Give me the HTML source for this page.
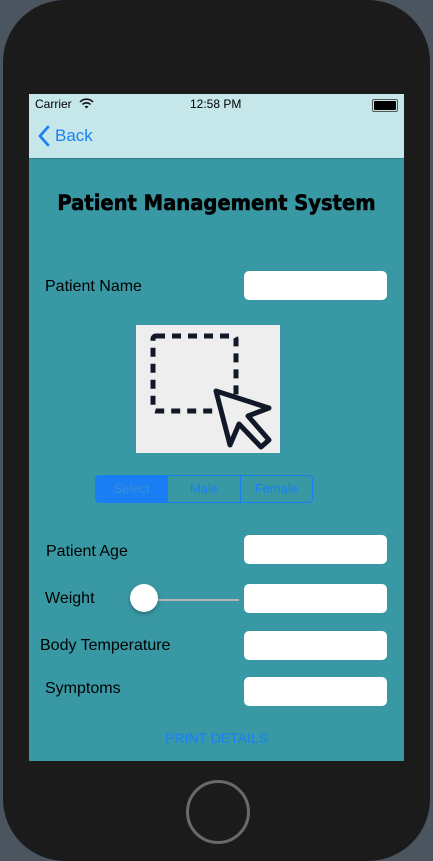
<!DOCTYPE html>
<html><head><style>
body{margin:0;width:433px;height:861px;background:#4a5560;overflow:hidden;font-family:"Liberation Sans",sans-serif;position:relative}
.phone{position:absolute;left:3px;top:0;width:427px;height:861px;background:#1b1b1b;border-radius:62px}
.scr{position:absolute;left:29px;top:94px;width:375px;height:667px;background:#3899a4}
.status{position:absolute;left:0;top:0;width:375px;height:64px;background:#c5e7ea;border-bottom:1px solid #2f7f88}
.t{position:absolute;font-size:16px;color:#000;white-space:nowrap}
.in{position:absolute;background:#fff;border-radius:5px;width:143px;height:29px;left:215px}
</style></head><body>
<div class="phone"></div>
<div class="scr">
 <div class="status">
  <div class="t" style="left:6px;top:3px;font-size:12px">Carrier</div>
  <svg style="position:absolute;left:50px;top:4px" width="15" height="11" viewBox="0 0 15 11"><path d="M1 4a9 9 0 0 1 13 0M3.5 6.5a5.5 5.5 0 0 1 8 0" stroke="#111" stroke-width="1.6" fill="none"/><path d="M5.5 8.5l2 2 2-2a3 3 0 0 0-4 0z" fill="#111"/></svg>
  <div class="t" style="left:161px;top:3px;font-size:12px">12:58 PM</div>
  <div style="position:absolute;left:343px;top:5px;width:22px;height:9px;border:1px solid #555;border-radius:2px;padding:1px;box-sizing:content-box"><div style="width:22px;height:9px;background:#000;border-radius:1px"></div></div>
  <svg style="position:absolute;left:8px;top:31px" width="14" height="22" viewBox="0 0 14 22"><path d="M11 2L3 11l8 9" stroke="#1a7ff5" stroke-width="2.8" fill="none" stroke-linecap="round" stroke-linejoin="round"/></svg>
  <div class="t" style="left:26px;top:32px;font-size:17px;color:#1a7ff5">Back</div>
 </div>
 <div class="t" style="left:0;width:375px;text-align:center;top:97px;font-size:21px;font-weight:bold;font-family:'DejaVu Sans',sans-serif;transform:scaleX(0.93);-webkit-text-stroke:0.6px #000">Patient Management System</div>
 <div class="t" style="left:16px;top:184px">Patient Name</div>
 <div class="in" style="top:177px"></div>
 <div style="position:absolute;left:107px;top:231px;width:144px;height:128px;background:#eeeeee">
  <svg width="144" height="128" viewBox="0 0 144 128"><rect x="17" y="11" width="83" height="75" rx="3" fill="none" stroke="#111827" stroke-width="5" stroke-dasharray="9 7"/><path d="M80 66l53 17-21 8 21 24-8 7-22-23-9 21z" fill="#eee" stroke="#111827" stroke-width="5" stroke-linejoin="round"/></svg>
 </div>
 <div style="position:absolute;left:66px;top:381px;width:218px;height:28px;border:1px solid #1a7ff5;border-radius:4px;box-sizing:border-box;display:flex;font-size:13px;color:#1a7ff5">
  <div style="flex:1;background:#1a7ff5;color:#3a8fd0;text-align:center;line-height:26px">Select</div>
  <div style="flex:1;border-left:1px solid #1a7ff5;text-align:center;line-height:26px">Male</div>
  <div style="flex:1;border-left:1px solid #1a7ff5;text-align:center;line-height:26px">Female</div>
 </div>
 <div class="t" style="left:17px;top:449px">Patient Age</div>
 <div class="in" style="top:441px"></div>
 <div class="t" style="left:16px;top:496px">Weight</div>
 <div style="position:absolute;left:127px;top:505px;width:83px;height:2px;background:#b5b5b5"></div>
 <div style="position:absolute;left:101px;top:490px;width:28px;height:28px;border-radius:50%;background:#fff;box-shadow:0 2px 4px rgba(0,0,0,.3)"></div>
 <div class="in" style="top:490px"></div>
 <div class="t" style="left:11px;top:543px">Body Temperature</div>
 <div class="in" style="top:537px"></div>
 <div class="t" style="left:16px;top:586px">Symptoms</div>
 <div class="in" style="top:583px"></div>
 <div class="t" style="left:0;width:375px;text-align:center;top:636px;font-size:14px;color:#1a7ff5">PRINT DETAILS</div>
</div>
<div style="position:absolute;left:186px;top:780px;width:58px;height:58px;border:3px solid #6a6a6a;border-radius:50%"></div>
</body></html>
